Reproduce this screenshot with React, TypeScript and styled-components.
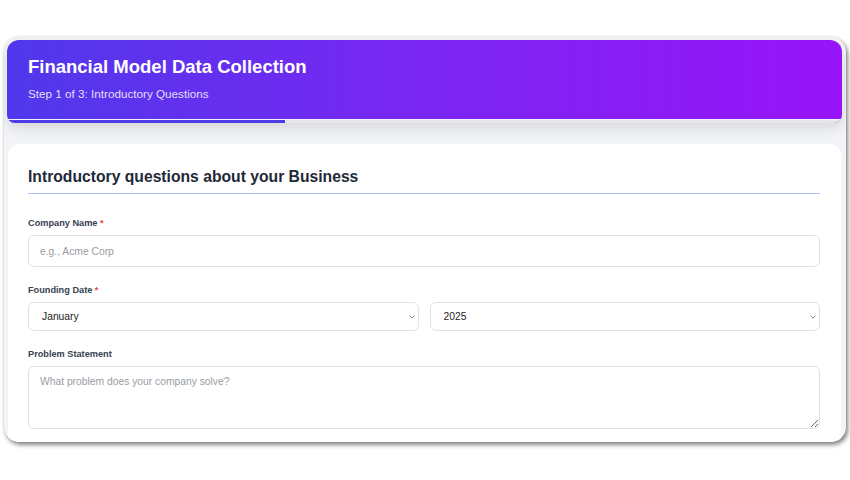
import React from "react";
import styled, { createGlobalStyle } from "styled-components";

const months = [
  "January", "February", "March", "April", "May", "June",
  "July", "August", "September", "October", "November", "December",
];
const years = ["2025", "2024", "2023", "2022", "2021", "2020"];

const App = () => {
  return (
    <>
      <GlobalStyle />
      <Page>
        <Frame>
          <Header>
            <HeaderBody>
              <Title>Financial Model Data Collection</Title>
              <Subtitle>Step 1 of 3: Introductory Questions</Subtitle>
            </HeaderBody>
            <ProgressTrack>
              <ProgressFill style={{ width: `${(1 / 3) * 100}%` }} />
            </ProgressTrack>
          </Header>

          <Card>
            <SectionTitle>Introductory questions about your Business</SectionTitle>

            <Field>
              <Label>
                Company Name <Required>*</Required>
              </Label>
              <TextInput placeholder="e.g., Acme Corp" />
            </Field>

            <Field>
              <Label>
                Founding Date <Required>*</Required>
              </Label>
              <SelectRow>
                <SelectWrap>
                  <Select defaultValue="January">
                    {months.map((m) => (
                      <option key={m}>{m}</option>
                    ))}
                  </Select>
                  <Chevron />
                </SelectWrap>
                <SelectWrap>
                  <Select defaultValue="2025">
                    {years.map((y) => (
                      <option key={y}>{y}</option>
                    ))}
                  </Select>
                  <Chevron />
                </SelectWrap>
              </SelectRow>
            </Field>

            <Field>
              <Label>Problem Statement</Label>
              <TextArea placeholder="What problem does your company solve?" />
            </Field>
          </Card>
        </Frame>
      </Page>
    </>
  );
};

const Chevron = () => (
  <ChevronIcon width="6" height="4" viewBox="0 0 6 4">
    <path d="M0.6 0.7 L3 3.1 L5.4 0.7" fill="none" stroke="#707070" strokeWidth="0.9" />
  </ChevronIcon>
);

export default App;

const GlobalStyle = createGlobalStyle`
  body {
    margin: 0;
    background: #ffffff;
    font-family: "Liberation Sans", Arial, sans-serif;
  }
  * {
    box-sizing: border-box;
  }
`;

const Page = styled.div`
  padding: 37px 0 0 4px;
  height: 480px;
`;

const Frame = styled.div`
  width: 842px;
  height: 405px;
  border-radius: 15px;
  overflow: hidden;
  background: #f3f4f7;
  padding: 3px 4px 0 3px;
  box-shadow: 2px 3px 4px rgba(0, 0, 0, 0.45), 0 0 3px rgba(0, 0, 0, 0.15);
`;

const Header = styled.div`
  border-radius: 12px 12px 8px 8px;
  overflow: hidden;
  background: linear-gradient(90deg, #5038ec 0%, #7a26f1 50%, #9814f9 100%);
  box-shadow: 0 5px 14px rgba(0, 0, 0, 0.12);
`;

const HeaderBody = styled.div`
  padding: 16px 21px 18px;
  display: flex;
  flex-direction: column;
`;

const Title = styled.h1`
  margin: 0;
  font-size: 18.5px;
  line-height: 22px;
  font-weight: 700;
  color: #ffffff;
`;

const Subtitle = styled.p`
  margin: 9px 0 0;
  font-size: 11.7px;
  line-height: 14px;
  color: rgba(255, 255, 255, 0.85);
`;

const ProgressTrack = styled.div`
  height: 4px;
  background: #e6e7ec;
  border-top: 1px solid #f4f4f8;
  display: flex;
`;

const ProgressFill = styled.div`
  background: #4c3ce8;
`;

const Card = styled.div`
  margin: 21px 1px 0;
  background: #ffffff;
  border-radius: 12px;
  padding: 23px 21px 24px 20px;
`;

const SectionTitle = styled.h2`
  margin: 0 0 24px;
  padding-bottom: 7px;
  font-size: 15.7px;
  line-height: 19px;
  font-weight: 700;
  color: #1f2937;
  border-bottom: 1px solid #b4bdf8;
`;

const Field = styled.div`
  display: flex;
  flex-direction: column;
  margin-bottom: 18px;
`;

const Label = styled.label`
  font-size: 9.2px;
  line-height: 11px;
  font-weight: 700;
  color: #374151;
  margin-bottom: 6px;
`;

const Required = styled.span`
  color: #ef4444;
`;

const TextInput = styled.input`
  height: 32px;
  padding: 0 11px;
  border: 1px solid #dfe1e7;
  border-radius: 6px;
  font-family: inherit;
  font-size: 10.3px;
  color: #222;
  outline: none;
  &::placeholder {
    color: #9a9ca3;
  }
`;

const SelectRow = styled.div`
  display: grid;
  grid-template-columns: 1fr 1fr;
  gap: 11px;
`;

const SelectWrap = styled.div`
  position: relative;
`;

const Select = styled.select`
  appearance: none;
  width: 100%;
  height: 29px;
  padding: 0 20px 0 13px;
  border: 1px solid #dfe1e7;
  border-radius: 6px;
  background: #ffffff;
  font-family: inherit;
  font-size: 10.3px;
  color: #222;
  outline: none;
`;

const ChevronIcon = styled.svg`
  position: absolute;
  right: 4px;
  top: 13px;
  pointer-events: none;
`;

const TextArea = styled.textarea`
  height: 63px;
  padding: 8px 11px;
  border: 1px solid #dfe1e7;
  border-radius: 6px;
  font-family: inherit;
  font-size: 10.3px;
  line-height: 14px;
  color: #222;
  outline: none;
  resize: vertical;
  &::placeholder {
    color: #9a9ca3;
  }
`;
